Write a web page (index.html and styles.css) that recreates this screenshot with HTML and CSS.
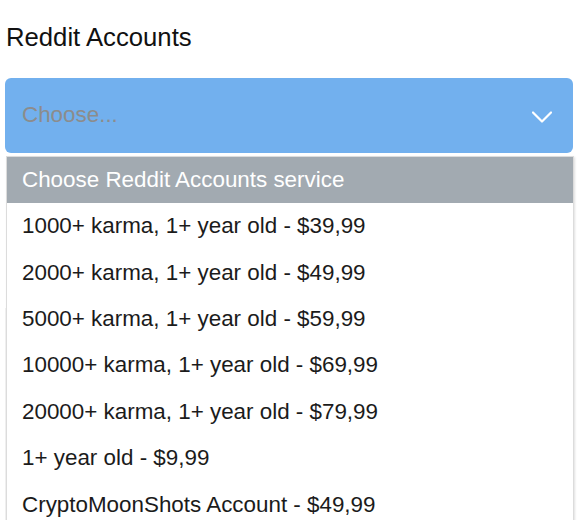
FILE: index.html
```html
<!DOCTYPE html>
<html>
<head>
<meta charset="utf-8">
<link rel="stylesheet" href="styles.css">
</head>
<body>
<div class="page">
  <h1 class="title">Reddit Accounts</h1>
  <div class="field">
    <div class="select">
      <span class="placeholder">Choose...</span>
      <svg class="chevron" width="20" height="12" viewBox="0 0 20 12"><polyline points="1,1.5 10,10.5 19,1.5" fill="none" stroke="#ffffff" stroke-width="2.2" stroke-linecap="round" stroke-linejoin="round"/></svg>
    </div>
    <ul class="menu">
      <li class="menu-head">Choose Reddit Accounts service</li>
      <li class="opt">1000+ karma, 1+ year old - $39,99</li>
      <li class="opt">2000+ karma, 1+ year old - $49,99</li>
      <li class="opt">5000+ karma, 1+ year old - $59,99</li>
      <li class="opt">10000+ karma, 1+ year old - $69,99</li>
      <li class="opt">20000+ karma, 1+ year old - $79,99</li>
      <li class="opt">1+ year old - $9,99</li>
      <li class="opt">CryptoMoonShots Account - $49,99</li>
    </ul>
  </div>
  <div class="behind"></div>
</div>
</body>
</html>
```
FILE: styles.css
```css
html, body {
  margin: 0;
  padding: 0;
  background: #ffffff;
  overflow: hidden;
}
body {
  font-family: "Liberation Sans", Arial, Helvetica, sans-serif;
  color: #1b1b1b;
  width: 578px;
  height: 520px;
}
.page {
  padding: 25px 5px 0 5px;
}
.title {
  margin: 0 0 0 1px;
  font-size: 25.7px;
  line-height: 25px;
  font-weight: normal;
  color: #111111;
}
.field {
  position: relative;
  margin-top: 28px;
}
.select {
  height: 75px;
  width: 568px;
  box-sizing: border-box;
  background: #72b0ee;
  border-radius: 6px;
  display: flex;
  align-items: center;
  justify-content: space-between;
  padding: 0 21px 0 17px;
}
.placeholder {
  font-size: 22.4px;
  color: #8c8c8c;
  margin-top: -1px;
}
.chevron {
  display: block;
  margin-top: 3px;
}
.menu {
  position: absolute;
  top: calc(100% + 3px);
  left: 1px;
  width: 568px;
  box-sizing: border-box;
  margin: 0;
  padding: 0;
  list-style: none;
  background: #ffffff;
  border: 1px solid #dcdcdc;
  box-shadow: 1px 1px 2px rgba(0,0,0,0.12);
  z-index: 2;
}
.menu-head {
  height: 46px;
  background: #a2aab1;
  color: #ffffff;
  font-size: 22.4px;
  display: flex;
  align-items: center;
  padding-left: 15px;
}
.opt {
  height: 46.4px;
  font-size: 22.4px;
  color: #1b1b1b;
  display: flex;
  align-items: center;
  padding-left: 15px;
}
.behind {
  margin-top: 155px;
  height: 260px;
  background: #f1f1f1;
}
```
